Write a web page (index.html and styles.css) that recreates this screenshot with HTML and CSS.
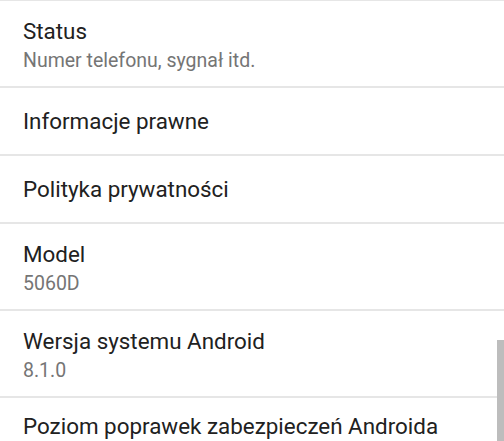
FILE: index.html
```html
<!DOCTYPE html>
<html lang="pl">

<head>
    <meta charset="UTF-8">
    <meta name="viewport" content="width=device-width, initial-scale=1.0">
    <title>Informacje o telefonie</title>
    <link rel="stylesheet" href="styles.css">
</head>

<body>
    <div class="settings-list">
        <div class="item">
            <div class="item-title">Status</div>
            <div class="item-summary">Numer telefonu, sygnał itd.</div>
        </div>
        <div class="item single">
            <div class="item-title">Informacje prawne</div>
        </div>
        <div class="item single">
            <div class="item-title">Polityka prywatności</div>
        </div>
        <div class="item">
            <div class="item-title">Model</div>
            <div class="item-summary">5060D</div>
        </div>
        <div class="item">
            <div class="item-title">Wersja systemu Android</div>
            <div class="item-summary">8.1.0</div>
        </div>
        <div class="item last">
            <div class="item-title">Poziom poprawek zabezpieczeń Androida</div>
        </div>
    </div>

    <div class="scrollbar"></div>
</body>

</html>
```

FILE: styles.css
```css
:root {
    --bg-color: #ffffff;
    --title-color: #212121;
    --summary-color: #757575;
    --divider-color: #e6e6e6;
    --scroll-thumb: #bdbdbd;
}

body {
    margin: 0;
    background-color: var(--bg-color);
    font-family: Roboto, 'Noto Sans', sans-serif;
    overflow: hidden;
    height: 441px;
}

.settings-list {
    border-top: 1px solid var(--divider-color);
    height: 440px;
    overflow: hidden;
}

.item {
    display: flex;
    flex-direction: column;
    justify-content: center;
    height: 82px;
    padding: 3px 23px 0;
    border-bottom: 2px solid var(--divider-color);
}

.item.single {
    height: 66px;
    padding-top: 0;
}

.item.last {
    border-bottom: none;
    justify-content: flex-start;
    padding-top: 14px;
}

.item-title {
    font-size: 22.4px;
    line-height: 28px;
    color: var(--title-color);
    white-space: nowrap;
}

.item-summary {
    font-size: 19.5px;
    line-height: 26px;
    margin-top: 3px;
    color: var(--summary-color);
}

.scrollbar {
    position: absolute;
    right: 0;
    top: 340px;
    width: 7px;
    height: 101px;
    background-color: var(--scroll-thumb);
}
```
